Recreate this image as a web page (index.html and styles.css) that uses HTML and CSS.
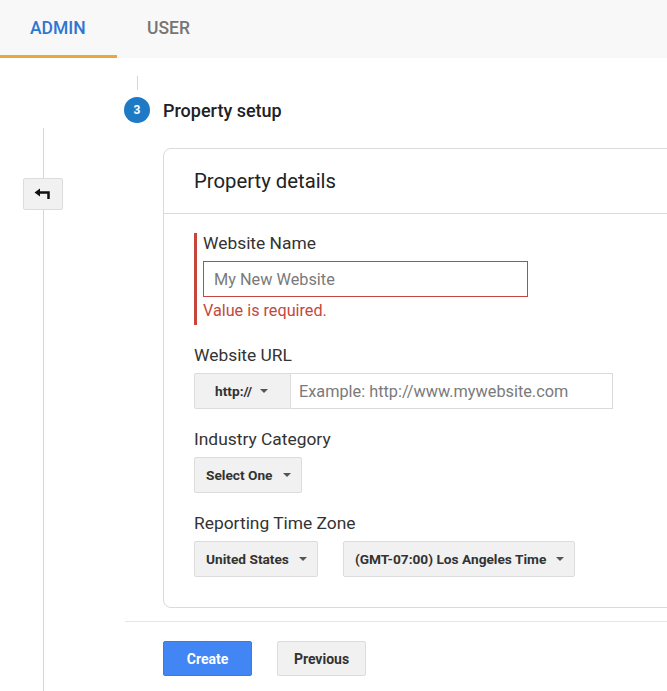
FILE: index.html
```html
<!DOCTYPE html>
<html lang="en">
<head>
<meta charset="UTF-8">
<meta name="viewport" content="width=device-width, initial-scale=1.0">
<title>Create Property</title>
<link rel="stylesheet" href="styles.css">
</head>
<body>
<nav class="tabs">
  <div class="tab active">ADMIN</div>
  <div class="tab">USER</div>
</nav>
<div class="page">
  <div class="rail">
    <div class="rail-line top"></div>
    <button class="back-btn" title="Back">
      <svg width="18" height="14" viewBox="0 0 18 14">
        <path d="M0.5 5.5 L6 1.5 L6 9.5 Z" fill="#111"/>
        <path d="M5.5 5.5 H14.5 V12" fill="none" stroke="#111" stroke-width="2.5"/>
      </svg>
    </button>
    <div class="rail-line"></div>
  </div>
  <div class="content">
    <div class="step-line"></div>
    <div class="step-head">
      <span class="step-num">3</span>
      <span class="step-title">Property setup</span>
    </div>
    <div class="card">
      <div class="card-head">Property details</div>
      <div class="card-body">
        <div class="field error">
          <label>Website Name</label>
          <input class="text-input name-input" type="text" placeholder="My New Website">
          <div class="error-msg">Value is required.</div>
        </div>
        <div class="field">
          <label>Website URL</label>
          <div class="url-group">
            <div class="select proto">http:// <span class="caret"></span></div>
            <input class="text-input url-input" type="text" placeholder="Example: http://www.mywebsite.com">
          </div>
        </div>
        <div class="field">
          <label>Industry Category</label>
          <div class="select-row">
            <div class="select">Select One <span class="caret"></span></div>
          </div>
        </div>
        <div class="field">
          <label>Reporting Time Zone</label>
          <div class="select-row">
            <div class="select">United States <span class="caret"></span></div>
            <div class="select">(GMT-07:00) Los Angeles Time <span class="caret"></span></div>
          </div>
        </div>
      </div>
    </div>
    <div class="sep"></div>
    <div class="actions">
      <button class="btn primary">Create</button>
      <button class="btn">Previous</button>
    </div>
  </div>
</div>
</body>
</html>
```

FILE: styles.css
```css
html, body {
  margin: 0;
  padding: 0;
  height: 100%;
}
body {
  font-family: Roboto, "Noto Sans", Arial, sans-serif;
  color: #333;
  background: #fff;
  overflow: hidden;
}
.tabs {
  display: flex;
  height: 58px;
  background-color: #f8f8f8;
}
.tab {
  box-sizing: border-box;
  height: 58px;
  padding: 18px 30px 0;
  font-size: 17.5px;
  font-weight: 500;
  color: #757575;
}
.tab.active {
  width: 117px;
  color: #2f76d2;
  border-bottom: 3px solid #e9a83c;
}
.page {
  display: flex;
  height: 633px;
}
.rail {
  width: 86px;
  flex-shrink: 0;
  display: flex;
  flex-direction: column;
  align-items: center;
  padding-top: 70px;
  box-sizing: border-box;
}
.rail-line {
  width: 1px;
  flex: 1;
  background-color: #d6d6d6;
}
.rail-line.top {
  flex: none;
  height: 50px;
}
.back-btn {
  width: 40px;
  height: 32px;
  padding: 0;
  margin: 0;
  background-color: #f1f1f1;
  border: 1px solid #dcdcdc;
  border-radius: 2px;
  display: flex;
  align-items: center;
  justify-content: center;
  cursor: pointer;
}
.content {
  flex: 1;
  display: flex;
  flex-direction: column;
  min-width: 0;
}
.step-line {
  width: 1px;
  height: 14px;
  margin: 18px 0 0 51px;
  background-color: #d6d6d6;
}
.step-head {
  display: flex;
  align-items: center;
  margin: 7px 0 0 38px;
  height: 26px;
}
.step-num {
  width: 26px;
  height: 26px;
  border-radius: 50%;
  background-color: #1e7ac5;
  color: #fff;
  font-size: 12px;
  font-weight: 700;
  display: flex;
  align-items: center;
  justify-content: center;
  margin-right: 13px;
}
.step-title {
  font-size: 18px;
  font-weight: 500;
  color: #202124;
}
.card {
  margin: 25px 0 0 77px;
  width: 560px;
  border: 1px solid #dadada;
  border-radius: 8px;
  box-sizing: border-box;
}
.card-head {
  height: 64px;
  line-height: 64px;
  padding-left: 30px;
  font-size: 20.3px;
  color: #222;
  border-bottom: 1px solid #dadada;
}
.card-body {
  padding: 19px 30px 30px;
}
.field {
  margin-bottom: 20px;
}
.field:last-child {
  margin-bottom: 0;
}
.field label {
  display: block;
  height: 20px;
  line-height: 20px;
  font-size: 17.4px;
  color: #333;
  margin-bottom: 8px;
}
.field.error {
  border-left: 3px solid #c5473c;
  padding-left: 6px;
}
.text-input {
  box-sizing: border-box;
  font-family: inherit;
  font-size: 16.3px;
  color: #333;
  border: 1px solid #dadada;
  outline: none;
  margin: 0;
}
.text-input::placeholder {
  color: #7a7a7a;
}
.name-input {
  display: block;
  width: 325px;
  height: 36px;
  padding: 0 10px;
  border-color: #c5473c;
}
.error-msg {
  font-size: 16.2px;
  color: #c5473c;
  height: 28px;
  line-height: 28px;
}
.url-group {
  display: flex;
  height: 36px;
}
.url-input {
  width: 322px;
  height: 36px;
  padding: 0 8px;
  border-left: none;
}
.select-row {
  display: flex;
  gap: 25px;
}
.select {
  box-sizing: border-box;
  height: 36px;
  padding: 0 10px 0 11px;
  display: flex;
  align-items: center;
  background-color: #f1f1f1;
  border: 1px solid #dcdcdc;
  border-radius: 2px;
  font-size: 13.7px;
  font-weight: 700;
  color: #333;
  white-space: nowrap;
}
.select.proto {
  width: 97px;
  padding: 0 0 0 20px;
  border-radius: 2px 0 0 2px;
}
.caret {
  display: inline-block;
  width: 0;
  height: 0;
  margin-left: 10px;
  border-left: 4.5px solid transparent;
  border-right: 4.5px solid transparent;
  border-top: 4.5px solid #555;
}
.proto .caret {
  margin-left: 8px;
}
.sep {
  margin: 13px 0 0 39px;
  height: 1px;
  background-color: #e6e6e6;
}
.actions {
  display: flex;
  gap: 25px;
  margin: 19px 0 0 77px;
}
.btn {
  width: 89px;
  height: 35px;
  border: 1px solid #dcdcdc;
  border-radius: 2px;
  background-color: #f1f1f1;
  color: #333;
  font-family: inherit;
  font-size: 14px;
  font-weight: 700;
  cursor: pointer;
}
.btn.primary {
  background-color: #4285f4;
  border-color: #3b7ae6;
  color: #fff;
}
```
